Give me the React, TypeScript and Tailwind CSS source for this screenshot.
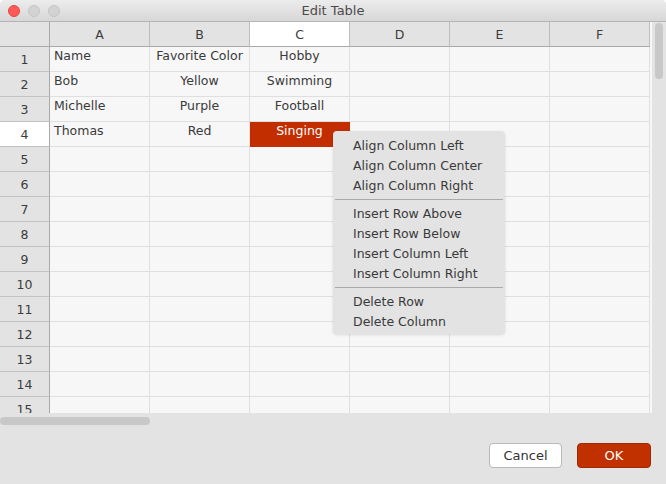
import type { ReactNode } from "react";

const COLUMNS = ["A", "B", "C", "D", "E", "F"];

// Cell contents: [row][col], empty beyond what is listed
const DATA: string[][] = [
  ["Name", "Favorite Color", "Hobby"],
  ["Bob", "Yellow", "Swimming"],
  ["Michelle", "Purple", "Football"],
  ["Thomas", "Red", "Singing"],
];

const ROW_COUNT = 15;
const SELECTED_ROW = 3;
const SELECTED_COL = 2;

const MENU: (string | null)[] = [
  "Align Column Left",
  "Align Column Center",
  "Align Column Right",
  null,
  "Insert Row Above",
  "Insert Row Below",
  "Insert Column Left",
  "Insert Column Right",
  null,
  "Delete Row",
  "Delete Column",
];

function TrafficLight({ className }: { className: string }) {
  return <span className={`h-[12px] w-[12px] rounded-full border ${className}`} />;
}

function HeaderCell({ children, active }: { children: ReactNode; active?: boolean }) {
  return (
    <div
      className={`flex h-[25px] w-[100px] shrink-0 items-center justify-center border-r border-b border-r-[#bdbdbd] border-b-[#a9a9a9] pt-[2px] text-[12.5px] text-[#3c3c3c] ${
        active ? "bg-white" : "bg-[#e3e3e3]"
      }`}
    >
      {children}
    </div>
  );
}

function Cell({ text, col, selected }: { text: string; col: number; selected: boolean }) {
  const align = col === 0 ? "text-left pl-[4px]" : "text-center";
  return (
    <div
      className={`h-[25px] w-[100px] shrink-0 border-r border-b leading-[18px] text-[12.5px] ${align} ${
        selected
          ? "border-[#c22e00] bg-[#c22e00] text-white"
          : "border-[#dfdfdf] text-[#3a3a3a]"
      }`}
    >
      {text}
    </div>
  );
}

function ContextMenu() {
  return (
    <div className="absolute left-[333px] top-[131px] w-[172px] rounded-[4px] bg-[#e3e3e3] pt-[5px] pb-[2px] shadow-[0_1px_3px_rgba(0,0,0,0.12)]">
      {MENU.map((item, i) =>
        item === null ? (
          <div key={i} className="h-[8px] px-[2px] pt-[3px]">
            <div className="h-px w-full bg-[#a9a9a9]" />
          </div>
        ) : (
          <div key={i} className="flex h-[20px] items-center pl-[20px] text-[12.5px] text-[#3a3a3a]">
            {item}
          </div>
        ),
      )}
    </div>
  );
}

export default function App() {
  return (
    <div
      className="relative flex h-[484px] w-[666px] flex-col overflow-hidden rounded-t-[5px] bg-[#e3e3e3]"
      style={{ fontFamily: '"DejaVu Sans", "Liberation Sans", sans-serif' }}
    >
      {/* title bar */}
      <div className="relative flex h-[22px] shrink-0 items-center border-b border-[#b4b4b4] bg-gradient-to-b from-[#ececec] to-[#d7d7d7] pl-[8px]">
        <div className="flex gap-[8px]">
          <TrafficLight className="border-[#e2463f] bg-[#fc5b57]" />
          <TrafficLight className="border-[#c4c4c4] bg-[#d3d3d3]" />
          <TrafficLight className="border-[#c4c4c4] bg-[#d3d3d3]" />
        </div>
        <div className="absolute inset-x-0 top-0 flex h-[21px] items-center justify-center text-[13px] text-[#4b4b4b]">
          Edit Table
        </div>
      </div>

      {/* table + vertical scrollbar */}
      <div className="flex h-[391px] shrink-0">
        <div className="w-[652px] overflow-hidden bg-[#f7f7f7]">
          <div className="flex">
            <div className="h-[25px] w-[50px] shrink-0 border-r border-b border-r-[#a9a9a9] border-b-[#a9a9a9] bg-[#e3e3e3]" />
            {COLUMNS.map((c, i) => (
              <HeaderCell key={c} active={i === SELECTED_COL}>
                {c}
              </HeaderCell>
            ))}
          </div>
          {Array.from({ length: ROW_COUNT }, (_, r) => (
            <div key={r} className="flex">
              <div
                className={`flex h-[25px] w-[50px] shrink-0 items-center justify-center border-r border-b border-r-[#a9a9a9] border-b-[#c2c2c2] pt-[2px] text-[12.5px] text-[#3c3c3c] ${
                  r === SELECTED_ROW ? "bg-white" : "bg-[#e3e3e3]"
                }`}
              >
                {r + 1}
              </div>
              {COLUMNS.map((c, ci) => (
                <Cell
                  key={c}
                  col={ci}
                  text={DATA[r]?.[ci] ?? ""}
                  selected={r === SELECTED_ROW && ci === SELECTED_COL}
                />
              ))}
            </div>
          ))}
        </div>
        <div className="w-[14px] pl-[3px] pt-[1px]">
          <div className="h-[56px] w-[8px] rounded-full bg-[#c8c8c8]" />
        </div>
      </div>

      {/* horizontal scrollbar */}
      <div className="h-[15px] shrink-0 pt-[4px]">
        <div className="h-[8px] w-[150px] rounded-full bg-[#c8c8c8]" />
      </div>

      {/* footer */}
      <div className="flex flex-1 items-start justify-end gap-[15px] pt-[15px] pr-[15px]">
        <button className="flex h-[25px] w-[73px] items-center justify-center rounded-[4px] border border-[#b9b9b9] bg-white text-[13px] text-[#333]">
          Cancel
        </button>
        <button className="flex h-[25px] w-[74px] items-center justify-center rounded-[4px] border border-[#a12900] bg-[#c13100] text-[13px] text-white">
          OK
        </button>
      </div>

      <ContextMenu />
    </div>
  );
}
